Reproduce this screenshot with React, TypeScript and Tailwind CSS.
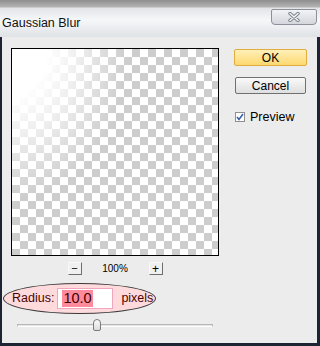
export default function App() {
  return (
    <div className="w-[320px] h-[346px] flex flex-col overflow-hidden font-['Liberation_Sans',Arial,sans-serif] text-black bg-[#ececec]">
      {/* title bar */}
      <div className="h-[37px] flex items-start justify-between bg-[linear-gradient(to_bottom,#8e8e8e_0px,#b4b4b4_7px,#e2e4e8_8px,#f6f7f9_20px,#dfe2e6_37px)]">
        <span className="mt-[16px] ml-[2px] text-[12.5px] leading-[14px] text-[#111]">Gaussian Blur</span>
        <div className="mt-[9px] mr-[3px] w-[46px] h-[16px] rounded-b-[4px] rounded-t-[2px] border border-[#8c9099] bg-[linear-gradient(to_bottom,#f2f3f5,#d3d6dc)] flex items-center justify-center">
          <svg width="12" height="10" viewBox="0 0 12 10">
            <path d="M2 1.5 L10 8.5 M10 1.5 L2 8.5" stroke="#7a7f88" strokeWidth="3.4" strokeLinecap="round" />
            <path d="M2 1.5 L10 8.5 M10 1.5 L2 8.5" stroke="#f4f5f7" strokeWidth="1.6" strokeLinecap="round" />
          </svg>
        </div>
      </div>

      {/* body */}
      <div className="flex-1 flex border-l-2 border-r-[3px] border-b-[3px] border-[#1e2334] bg-[#ececec]">
        <div className="w-[220px] flex flex-col">
          {/* preview */}
          <div className="ml-[9px] mt-[11px] w-[208px] h-[208px] border border-black bg-[conic-gradient(#cdcdcd_25%,#ffffff_0_50%,#cdcdcd_0_75%,#ffffff_0)] bg-[length:16px_16px]">
            <div className="w-full h-full bg-[radial-gradient(ellipse_115px_150px_at_0_0,#ffffff_30%,rgba(255,255,255,0.7)_55%,rgba(255,255,255,0)_100%)]" />
          </div>

          {/* zoom */}
          <div className="ml-[9px] w-[208px] mt-[6px] flex justify-center items-center">
            <div className="w-[14px] h-[13px] border border-[#f8f8f8] border-r-[#6e6e6e] border-b-[#6e6e6e] bg-[#f0f0f0] flex items-center justify-center text-[11px] leading-none">−</div>
            <span className="w-[67px] text-center text-[10px] leading-[13px]">100%</span>
            <div className="w-[14px] h-[13px] border border-[#f8f8f8] border-r-[#6e6e6e] border-b-[#6e6e6e] bg-[#f0f0f0] flex items-center justify-center text-[12px] leading-none">+</div>
          </div>

          {/* radius */}
          <div className="ml-px mt-[8px] w-[153px] h-[31px] rounded-[50%] border border-[#3a3a3a] bg-[#ffdadd] flex items-center text-[12.5px] text-[#4a0400]">
            <span className="ml-[8px]">Radius:</span>
            <div className="ml-[3px] w-[56px] h-[21px] border border-[#f2a6be] bg-white flex items-center pl-[4px]">
              <span className="bg-[#ff8a9c] text-[14.5px] leading-[17px] px-px text-[#3a0000]">10.0</span>
            </div>
            <span className="ml-[8px]">pixels</span>
          </div>

          {/* slider */}
          <div className="relative ml-[15px] mt-[5px] w-[196px] h-[13px]">
            <div className="absolute left-0 right-0 top-[5px] h-[3px] border border-[#b8b8b8] border-b-white bg-[#e4e4e4]" />
            <div className="absolute left-[76px] top-0 w-[8px] h-[12px] rounded-t-[4px] rounded-b-[2px] border border-[#7a7a7a] bg-[linear-gradient(to_bottom,#fafafa,#dcdcdc)]" />
          </div>
        </div>

        {/* buttons */}
        <div className="flex flex-col ml-[12px] mt-[12px]">
          <div className="w-[73px] h-[17px] rounded-[2px] border border-[#e0ad3e] bg-[linear-gradient(to_bottom,#fff0b8,#fdd870)] flex items-center justify-center text-[12px]">OK</div>
          <div className="ml-px mt-[11px] w-[71px] h-[17px] rounded-[2px] border border-[#707070] bg-[linear-gradient(to_bottom,#fafafa,#dedede)] flex items-center justify-center text-[12px]">Cancel</div>
          <label className="ml-px mt-[16px] flex items-center gap-[5px] text-[12.5px] leading-[14px]">
            <span className="w-[10px] h-[10px] border border-[#8f8f8f] bg-white flex items-center justify-center">
              <svg width="8" height="8" viewBox="0 0 8 8">
                <path d="M1 4 L3 6.5 L7 1" fill="none" stroke="#3a5fb0" strokeWidth="1.6" />
              </svg>
            </span>
            Preview
          </label>
        </div>
      </div>
    </div>
  );
}
